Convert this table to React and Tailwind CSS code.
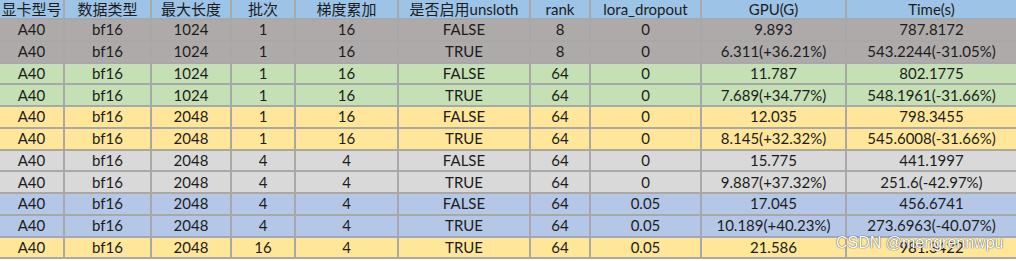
import React from 'react';

const cols = [
  { key: 'gpu', title: '显卡型号', w: 'w-[65px]' },
  { key: 'dtype', title: '数据类型', w: 'w-[87px]' },
  { key: 'len', title: '最大长度', w: 'w-[80px]' },
  { key: 'bs', title: '批次', w: 'w-[64px]' },
  { key: 'acc', title: '梯度累加', w: 'w-[103px]' },
  { key: 'uns', title: '是否启用unsloth', w: 'w-[132px]' },
  { key: 'rank', title: 'rank', w: 'w-[60px]' },
  { key: 'drop', title: 'lora_dropout', w: 'w-[111px]' },
  { key: 'mem', title: 'GPU(G)', w: 'w-[145px]' },
  { key: 'time', title: 'Time(s)', w: 'w-[169px]' },
];

const rows = [
  { bg: 'bg-[#aeaaaa]', v: ['A40', 'bf16', '1024', '1', '16', 'FALSE', '8', '0', '9.893', '787.8172'] },
  { bg: 'bg-[#aeaaaa]', v: ['A40', 'bf16', '1024', '1', '16', 'TRUE', '8', '0', '6.311(+36.21%)', '543.2244(-31.05%)'] },
  { bg: 'bg-[#c5e0b4]', v: ['A40', 'bf16', '1024', '1', '16', 'FALSE', '64', '0', '11.787', '802.1775'] },
  { bg: 'bg-[#c5e0b4]', v: ['A40', 'bf16', '1024', '1', '16', 'TRUE', '64', '0', '7.689(+34.77%)', '548.1961(-31.66%)'] },
  { bg: 'bg-[#ffe699]', v: ['A40', 'bf16', '2048', '1', '16', 'FALSE', '64', '0', '12.035', '798.3455'] },
  { bg: 'bg-[#ffe699]', v: ['A40', 'bf16', '2048', '1', '16', 'TRUE', '64', '0', '8.145(+32.32%)', '545.6008(-31.66%)'] },
  { bg: 'bg-[#d9d9d9]', v: ['A40', 'bf16', '2048', '4', '4', 'FALSE', '64', '0', '15.775', '441.1997'] },
  { bg: 'bg-[#d9d9d9]', v: ['A40', 'bf16', '2048', '4', '4', 'TRUE', '64', '0', '9.887(+37.32%)', '251.6(-42.97%)'] },
  { bg: 'bg-[#b4c7e7]', v: ['A40', 'bf16', '2048', '4', '4', 'FALSE', '64', '0.05', '17.045', '456.6741'] },
  { bg: 'bg-[#b4c7e7]', v: ['A40', 'bf16', '2048', '4', '4', 'TRUE', '64', '0.05', '10.189(+40.23%)', '273.6963(-40.07%)'] },
  { bg: 'bg-[#ffe699]', v: ['A40', 'bf16', '2048', '16', '4', 'TRUE', '64', '0.05', '21.586', '981.3422'] },
];

export default function App() {
  return (
    <div className="relative w-[1016px] h-[261px] bg-white overflow-hidden text-[15px] text-[#1c1c1c] font-['Lato','Noto_Sans_CJK_SC',sans-serif] leading-none">
      <div className="flex h-[20px] bg-[#9dc3e6] border-b-2 border-[#a8a8a8]">
        {cols.map((c) => (
          <div key={c.key} className={`${c.w} shrink-0 flex items-center justify-center border-r-2 border-[#a8a8a8] last:border-r-0 whitespace-nowrap overflow-hidden`}>
            {c.title}
          </div>
        ))}
      </div>
      {rows.map((r, i) => (
        <div key={i} className={`flex h-[21.75px] ${r.bg} border-b-2 border-[#a8a8a8]`}>
          {r.v.map((val, j) => (
            <div key={j} className={`${cols[j].w} shrink-0 flex items-center justify-center border-r-2 border-[#a8a8a8] last:border-r-0 whitespace-nowrap`}>
              {val}
            </div>
          ))}
        </div>
      ))}
      {/* watermark laid over the last row */}
      <div className="absolute left-[836px] top-[235px] text-[16px] text-white font-['Liberation_Sans',sans-serif] [text-shadow:0_0_1px_#555,0_0_1px_#555]">
        CSDN @mengrennwpu
      </div>
    </div>
  );
}
